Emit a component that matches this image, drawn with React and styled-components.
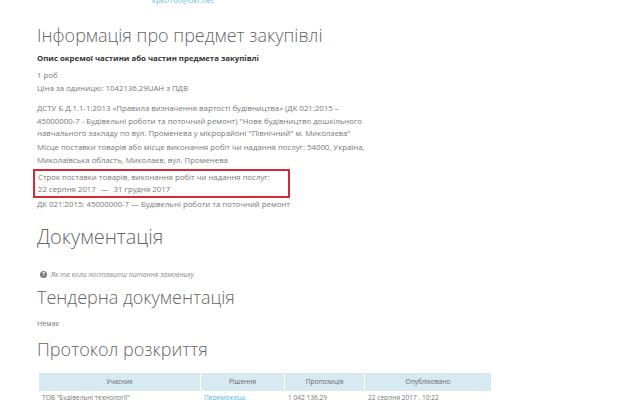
import React from "react";
import styled, { createGlobalStyle } from "styled-components";

const GlobalStyle = createGlobalStyle`
  html, body {
    margin: 0;
    padding: 0;
    background: #ffffff;
  }
  body {
    font-family: "Open Sans", "DejaVu Sans", sans-serif;
    color: #777777;
  }
`;

const Page = styled.div`
  width: 640px;
  height: 400px;
  overflow: hidden;
  padding-left: 37px;
  box-sizing: border-box;
`;

const ContactRow = styled.div`
  padding-left: 115px;
  margin-top: -4px;
  height: 8px;
  font-size: 7.5px;
  line-height: 8px;
  color: #6bb9df;
`;

const Heading = styled.h2`
  margin: ${(p) => p.$top || 0}px 0 0 0;
  font-size: ${(p) => p.$size || 18}px;
  line-height: 22px;
  font-weight: 300;
  color: #666666;
`;

const Label = styled.div`
  margin-top: 6px;
  font-size: 7.8px;
  line-height: 12px;
  font-weight: 700;
  color: #333333;
`;

const Block = styled.div`
  margin-top: ${(p) => p.$top || 0}px;
  font-size: 7.8px;
  line-height: 12.6px;
  color: #777777;
  max-width: 340px;
`;

const Highlight = styled.div`
  margin-top: 3px;
  margin-left: -4px;
  width: 247px;
  padding: 1px 3px 1px 3px;
  border: 2px solid #d42a36;
  font-size: 7.8px;
  line-height: 11.5px;
  color: #777777;
`;

const Dash = styled.span`
  margin: 0 5px;
`;

const Hint = styled.div`
  margin-top: 22px;
  display: flex;
  align-items: center;
  gap: 4px;
  padding-left: 3px;
  font-size: 6.9px;
  line-height: 10px;
  font-style: italic;
  color: #888888;
`;

const HintIcon = styled.span`
  width: 7px;
  height: 7px;
  border-radius: 50%;
  background: #7a7a7a;
  color: #ffffff;
  font-size: 5.5px;
  font-weight: 700;
  font-style: normal;
  line-height: 7px;
  text-align: center;
`;

const Empty = styled.div`
  margin-top: 10px;
  font-size: 7.2px;
  line-height: 10px;
  color: #777777;
`;

const Table = styled.table`
  margin-top: 13px;
  margin-left: 1px;
  width: 452px;
  border-collapse: separate;
  border-spacing: 1px 0;
  font-size: 6.6px;
  table-layout: fixed;
`;

const Th = styled.th`
  width: ${(p) => p.$w}px;
  height: 18px;
  padding: 0;
  background: #d7eaf2;
  font-weight: 400;
  color: #666666;
  text-align: center;
`;

const Td = styled.td`
  padding: 1px 3px 0 3px;
  height: 12px;
  color: ${(p) => (p.$link ? "#5bb4de" : "#777777")};
  text-decoration: ${(p) => (p.$link ? "underline" : "none")};
  white-space: nowrap;
  overflow: hidden;
`;

export default function App() {
  return (
    <>
      <GlobalStyle />
      <Page>
        <ContactRow>kpkо700@ukr.net</ContactRow>
        <Heading $top={20}>Інформація про предмет закупівлі</Heading>
        <Label>Опис окремої частини або частин предмета закупівлі</Label>
        <Block $top={5}>
          1 роб
          <br />
          Ціна за одиницю: 1042136.29UAH з ПДВ
        </Block>
        <Block $top={8}>
          ДСТУ Б Д.1.1-1:2013 «Правила визначення вартості будівництва» (ДК 021:2015 –
          45000000-7 - Будівельні роботи та поточний ремонт) "Нове будівництво дошкільного
          навчального закладу по вул. Променева у мікрорайоні "Північний" м. Миколаєва"
        </Block>
        <Block $top={1}>
          Місце поставки товарів або місце виконання робіт чи надання послуг: 54000, Україна,
          Миколаївська область, Миколаєв, вул. Променева
        </Block>
        <Highlight>
          Строк поставки товарів, виконання робіт чи надання послуг:
          <br />
          22 серпня 2017<Dash>—</Dash>31 грудня 2017
        </Highlight>
        <Block $top={0}>ДК 021:2015: 45000000-7 — Будівельні роботи та поточний ремонт</Block>
        <Heading $top={15} $size={20}>Документація</Heading>
        <Hint>
          <HintIcon>?</HintIcon>
          Як та коли поставити питання замовнику
        </Hint>
        <Heading $top={6}>Тендерна документація</Heading>
        <Empty>Немає</Empty>
        <Heading $top={10}>Протокол розкриття</Heading>
        <Table>
          <thead>
            <tr>
              <Th $w={161}>Учасник</Th>
              <Th $w={83}>Рішення</Th>
              <Th $w={79}>Пропозиція</Th>
              <Th $w={126}>Опубліковано</Th>
            </tr>
          </thead>
          <tbody>
            <tr>
              <Td>ТОВ "Будівельні технології"</Td>
              <Td $link>Переможець</Td>
              <Td>1 042 136.29</Td>
              <Td>22 серпня 2017 , 10:22</Td>
            </tr>
          </tbody>
        </Table>
      </Page>
    </>
  );
}
